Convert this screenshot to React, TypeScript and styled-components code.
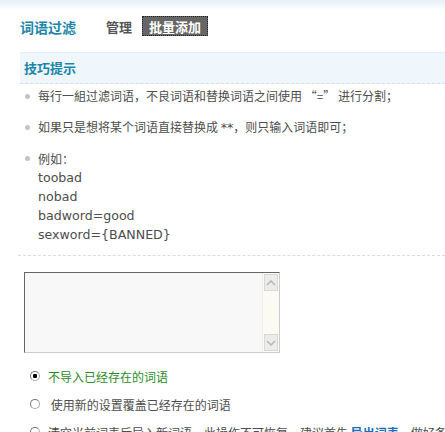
import styled, {createGlobalStyle} from 'styled-components';
import React, {useState} from 'react';

const GlobalStyle = createGlobalStyle`
    body {
        margin: 0;
        background: #fff;
        font-family: "Noto Sans CJK SC", "DejaVu Sans", sans-serif;
        font-size: 12px;
        color: #4d4d4d;
    }
`;

const examples = ["toobad", "nobad", "badword=good", "sexword={BANNED}"];

const options = [
    {id: "ignore", label: "不导入已经存在的词语"},
    {id: "cover", label: " 使用新的设置覆盖已经存在的词语"},
];

export default function App() {
    const [mode, setMode] = useState("ignore");
    return (
        <Page>
            <GlobalStyle/>
            <Header>
                <Title>词语过滤</Title>
                <NavLink>管理</NavLink>
                <ActiveTab>批量添加</ActiveTab>
            </Header>
            <TipBar>技巧提示</TipBar>
            <TipList>
                <TipItem>每行一組过滤词语，不良词语和替换词语之间使用 “=” 进行分割；</TipItem>
                <TipItem>如果只是想将某个词语直接替换成 <Latin>**</Latin>，则只输入词语即可；</TipItem>
                <TipItem>
                    <ExampleLine>例如：</ExampleLine>
                    {examples.map((e) => <ExampleLine key={e}><Latin>{e}</Latin></ExampleLine>)}
                </TipItem>
            </TipList>
            <Divider/>
            <InputBox>
                <Input/>
                <ScrollTrack>
                    <ScrollButton>
                        <svg width="10" height="6" viewBox="0 0 10 6"><path d="M1 5 L5 1 L9 5" stroke="#b8b8b8" strokeWidth="1.6" fill="none"/></svg>
                    </ScrollButton>
                    <ScrollButton>
                        <svg width="10" height="6" viewBox="0 0 10 6"><path d="M1 1 L5 5 L9 1" stroke="#b8b8b8" strokeWidth="1.6" fill="none"/></svg>
                    </ScrollButton>
                </ScrollTrack>
            </InputBox>
            <Options>
                {options.map((o) => (
                    <OptionRow key={o.id} onClick={() => setMode(o.id)}>
                        <Radio checked={mode === o.id}/>
                        <OptionLabel checked={mode === o.id}>{o.label}</OptionLabel>
                    </OptionRow>
                ))}
                <OptionRow onClick={() => setMode("clear")}>
                    <Radio checked={mode === "clear"}/>
                    <OptionLabel checked={mode === "clear"}>
                        清空当前词表后导入新词语，此操作不可恢复，建议首先 <ExportLink>导出词表</ExportLink>，做好备份
                    </OptionLabel>
                </OptionRow>
            </Options>
        </Page>
    )
}

const Page = styled.div`
    background: linear-gradient(#e6f0f9 0, #fff 10px);
    min-height: 460px;
`;

const Header = styled.div`
    display: flex;
    align-items: center;
    padding: 16px 0 0 20px;
    height: 20px;
`;

const Title = styled.span`
    font-weight: bold;
    font-size: 14px;
    color: #1b86a8;
    margin-right: 30px;
    margin-top: 1px;
`;

const NavLink = styled.span`
    font-weight: bold;
    font-size: 13px;
    color: #555;
    margin-right: 10px;
    margin-top: 1px;
`;

const ActiveTab = styled.span`
    display: flex;
    align-items: center;
    height: 18px;
    padding: 0 6px;
    background: #666;
    border: 1px dotted #222;
    color: #fff;
    font-weight: bold;
    font-size: 13px;
`;

const TipBar = styled.div`
    margin: 16px 0 0 20px;
    height: 30px;
    line-height: 30px;
    padding-left: 4px;
    background: #eff6fc;
    border-top: 1px solid #e6f0f8;
    border-bottom: 1px dashed #d4dde4;
    color: #1b86a8;
    font-weight: bold;
    font-size: 13px;
`;

const TipList = styled.ul`
    list-style: none;
    margin: 0;
    padding: 3px 0 0 38px;
`;

const TipItem = styled.li`
    position: relative;
    line-height: 18px;
    margin-bottom: 13px;
    &:last-child { margin-bottom: 0; }
    &::before {
        content: "";
        position: absolute;
        left: -13px;
        top: 7px;
        width: 5px;
        height: 5px;
        border-radius: 50%;
        background: #c4c4c4;
    }
`;

const ExampleLine = styled.div`
    line-height: 19px;
    margin-top: -1px;
`;

const Latin = styled.span`
    font-family: "DejaVu Sans", Verdana, sans-serif;
    font-size: 12.6px;
`;

const Divider = styled.div`
    margin: 11px 0 0 18px;
    border-top: 1px dashed #dcdcdc;
`;

const InputBox = styled.div`
    display: flex;
    margin: 16px 0 0 24px;
    width: 254px;
    height: 79px;
    border: 1px solid #ccc;
    border-top-color: #666;
    border-left-color: #666;
    background: #f8f8f8;
`;

const Input = styled.textarea`
    flex: 1;
    border: none;
    outline: none;
    resize: none;
    background: transparent;
`;

const ScrollTrack = styled.div`
    width: 16px;
    display: flex;
    flex-direction: column;
    justify-content: space-between;
    background: #fbfbf3;
    border-left: 1px solid #eee;
`;

const ScrollButton = styled.div`
    height: 15px;
    display: flex;
    align-items: center;
    justify-content: center;
    background: #ececec;
    border: 1px solid #d8d8d8;
    margin: 1px;
`;

const Options = styled.div`
    padding: 14px 0 0 30px;
    display: flex;
    flex-direction: column;
    gap: 10px;
`;

const OptionRow = styled.div`
    display: flex;
    align-items: center;
    height: 18px;
    white-space: nowrap;
    cursor: pointer;
`;

const Radio = styled.span`
    box-sizing: border-box;
    width: 10px;
    height: 10px;
    border-radius: 50%;
    border: 1px solid #aaa;
    border-top-color: #777;
    border-left-color: #777;
    background: ${props => props.checked ? "radial-gradient(circle, #000 0 2px, #fff 2.5px)" : "#fff"};
    margin-right: 8px;
    flex-shrink: 0;
`;

const OptionLabel = styled.span`
    color: ${props => props.checked ? "#2a8c2a" : "#4d4d4d"};
    white-space: pre;
`;

const ExportLink = styled.a`
    color: #1b6fb8;
    font-weight: bold;
    text-decoration: none;
`;
